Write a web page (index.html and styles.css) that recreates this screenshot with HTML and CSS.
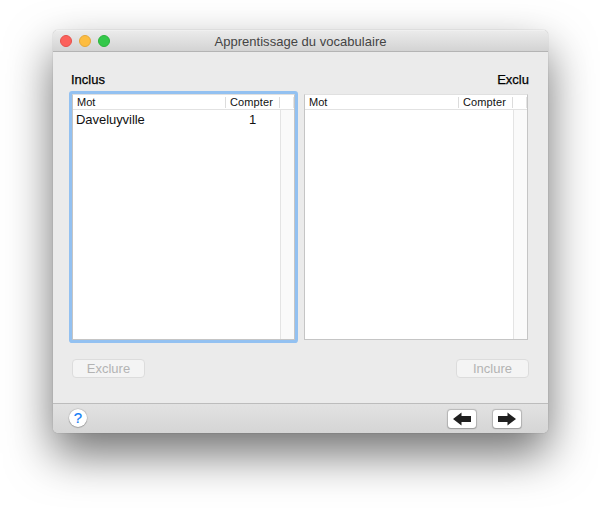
FILE: index.html
```html
<!DOCTYPE html>
<html lang="fr">
<head>
<meta charset="utf-8">
<title>Apprentissage du vocabulaire</title>
<link rel="stylesheet" href="styles.css">
</head>
<body>
<main class="window">
  <header class="titlebar">
    <div class="lights"><i class="light close"></i><i class="light minimize"></i><i class="light expand"></i></div>
    <h1 class="title">Apprentissage du vocabulaire</h1>
  </header>
  <section class="content">
    <div class="labels"><span class="label-in">Inclus</span><span class="label-out">Exclu</span></div>
    <div class="lists">
      <div class="list focused">
        <div class="head"><span class="col-word">Mot</span><span class="col-count">Compter</span><span class="col-end"></span></div>
        <div class="body">
          <div class="rows"><div class="row"><span class="word">Daveluyville</span><span class="count">1</span></div></div>
          <div class="scroller"></div>
        </div>
      </div>
      <div class="list excluded">
        <div class="head"><span class="col-word">Mot</span><span class="col-count">Compter</span><span class="col-end"></span></div>
        <div class="body"><div class="rows"></div><div class="scroller"></div></div>
      </div>
    </div>
    <div class="actions">
      <button class="button exclude" disabled>Exclure</button>
      <button class="button include" disabled>Inclure</button>
    </div>
  </section>
  <footer class="footer">
    <button class="help">?</button>
    <div class="nav">
      <button class="arrow" aria-label="Précédent"><svg width="18" height="14" viewBox="0 0 18 14"><path d="M0 7 8.500 .5V4H18v6H8.500v3.500z"/></svg></button>
      <button class="arrow" aria-label="Suivant"><svg width="18" height="14" viewBox="0 0 18 14"><path d="M18 7 9.500 .5V4H0v6h9.500v3.500z"/></svg></button>
    </div>
  </footer>
</main>
</body>
</html>
```
FILE: styles.css
```css
* { box-sizing: border-box; }
body {
  margin: 0;
  height: 508px;
  overflow: hidden;
  background: #fff;
  font-family: "Liberation Sans", Arial, sans-serif;
  color: #111;
}
button { margin: 0; padding: 0; font-family: inherit; }
.window {
  width: 495px;
  height: 403px;
  margin: 30px 0 0 53px;
  display: flex;
  flex-direction: column;
  overflow: hidden;
  border-radius: 5px;
  background: #ebebeb;
  box-shadow: 0 0 1px rgba(0,0,0,.4), 0 21px 46px rgba(0,0,0,.56);
}
.titlebar {
  height: 22px;
  flex: none;
  display: grid;
  grid-template-columns: 80px 1fr 80px;
  align-items: center;
  background: linear-gradient(#ebebeb, #d3d3d3);
  border-top: 1px solid #f0f0f0;
  border-bottom: 1px solid #b4b4b4;
}
.lights { display: flex; gap: 7px; padding: 0 0 1px 7px; }
.light { width: 12px; height: 12px; border-radius: 50%; }
.close { background: #fc615c; border: 1px solid #e5504b; }
.minimize { background: #fdbd41; border: 1px solid #e4a73a; }
.expand { background: #34c84a; border: 1px solid #2bb33c; }
.title {
  margin: 0;
  padding-top: 1px;
  font-size: 13px;
  font-weight: 400;
  line-height: 20px;
  letter-spacing: .03px;
  text-align: center;
  white-space: nowrap;
  color: #444;
}
.content { flex: 1; padding: 19px 20px 0 18px; }
.labels {
  display: flex;
  justify-content: space-between;
  height: 24px;
  font-size: 13px;
  line-height: 18px;
  color: #000;
  -webkit-text-stroke: .25px #000;
}
.label-out { margin-right: -1px; }
.lists { display: flex; gap: 9px; padding-left: 1px; margin-top: -1px; }
.list {
  width: 223px;
  height: 246px;
  background: #fff;
  border: 1px solid #c5c5c5;
  border-top-color: #e0e0e0;
  display: flex;
  flex-direction: column;
}
.focused { box-shadow: 0 0 0 3px #93c1f1; border-radius: 1px; }
.excluded { width: 224px; }
.head {
  height: 15px;
  flex: none;
  display: flex;
  align-items: center;
  border-bottom: 1px solid #e2e2e2;
  font-size: 11px;
  line-height: 14px;
}
.col-word { width: 152px; padding-left: 4px; }
.excluded .col-word { width: 153px; }
.col-count { width: 54px; height: 11px; line-height: 11px; padding-left: 4px; border-left: 1px solid #dcdcdc; letter-spacing: .12px; }
.col-end { height: 11px; flex: 1; border-left: 1px solid #dcdcdc; border-right: 1px solid #e4e4e4; }
.body { flex: 1; display: flex; }
.rows { flex: 1; }
.row { display: flex; height: 19px; font-size: 13px; line-height: 20px; padding-left: 3px; }
.word { width: 173px; letter-spacing: -.05px; }
.scroller { width: 14px; background: #fafafa; border-left: 1px solid #e4e4e4; }
.actions { display: flex; justify-content: space-between; margin: 19px -1px 0 0; padding-left: 1px; }
.button {
  width: 73px;
  height: 19px;
  border: 1px solid #dcdcdc;
  border-radius: 4px;
  background: #f4f4f4;
  color: #b3b3b3;
  font-size: 13px;
  line-height: 17px;
}
.footer {
  height: 30px;
  flex: none;
  display: flex;
  justify-content: space-between;
  align-items: center;
  padding: 0 27px 1px 16px;
  background: linear-gradient(#e2e2e2, #d5d5d5);
  border-top: 1px solid #bcbcbc;
}
.help {
  width: 18px;
  height: 18px;
  border: 0;
  border-radius: 50%;
  background: #fff;
  box-shadow: 0 0 1px 0.5px rgba(0,0,0,.2), 0 1px 1px rgba(0,0,0,.15);
  color: #127df7;
  font-size: 15px;
  line-height: 18px;
  -webkit-text-stroke: .2px #127df7;
}
.nav { display: flex; gap: 17px; padding-top: 1px; }
.arrow {
  display: flex;
  align-items: center;
  justify-content: center;
  width: 28px;
  height: 18px;
  border: 0;
  border-radius: 3px;
  background: #fff;
  box-shadow: 0 0 1px 0.5px rgba(0,0,0,.18), 0 1px 1px rgba(0,0,0,.12);
}
.arrow svg { display: block; fill: #202020; }
```
